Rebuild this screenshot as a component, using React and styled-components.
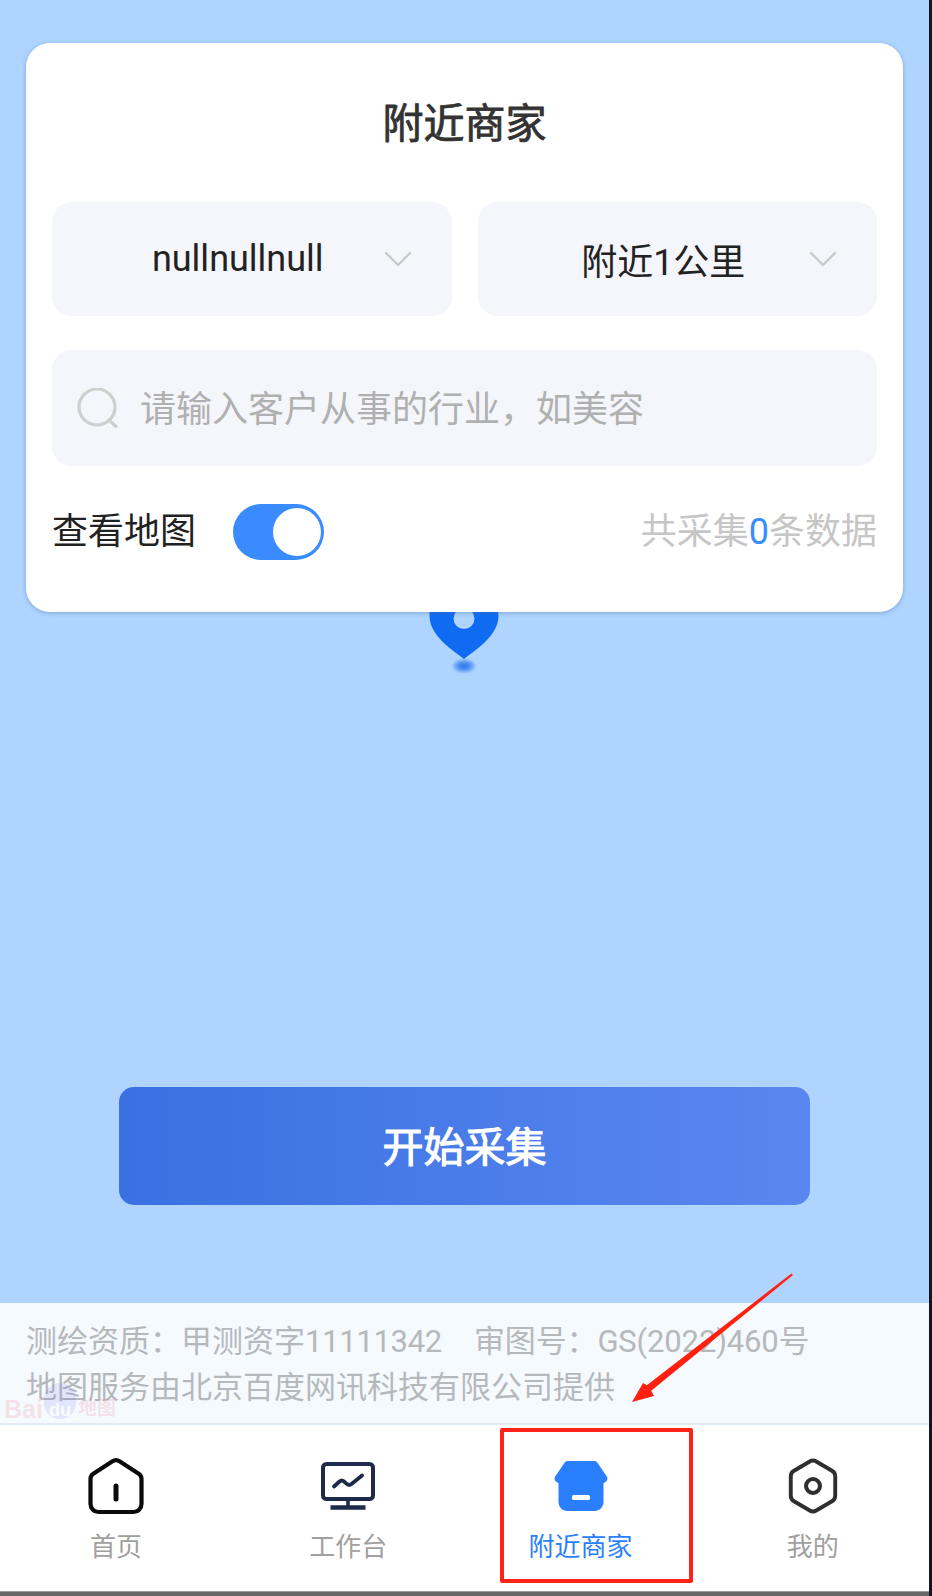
import React from "react";
import styled, { createGlobalStyle } from "styled-components";

const GlobalStyle = createGlobalStyle`
  html, body {
    margin: 0;
    padding: 0;
    background: #15151f;
  }
  * {
    box-sizing: border-box;
  }
  body {
    font-family: Roboto, "Noto Sans CJK SC", sans-serif;
  }
`;

const tabs = [
  { label: "首页", icon: <HomeIcon /> },
  { label: "工作台", icon: <MonitorIcon /> },
  { label: "附近商家", icon: <StoreIcon />, active: true },
  { label: "我的", icon: <HexIcon /> },
];

export default function App() {
  return (
    <>
      <GlobalStyle />
      <Screen>
        <MapArea>
          <Pin />
          <Card>
            <Title>附近商家</Title>
            <Selects>
              <Select>
                <SelectText>nullnullnull</SelectText>
                <Chevron />
              </Select>
              <Select>
                <SelectText>附近1公里</SelectText>
                <Chevron />
              </Select>
            </Selects>
            <Search>
              <SearchIcon />
              <Placeholder>请输入客户从事的行业，如美容</Placeholder>
            </Search>
            <MapRow>
              <MapToggle>
                <span>查看地图</span>
                <Toggle>
                  <Knob />
                </Toggle>
              </MapToggle>
              <Count>
                共采集<b>0</b>条数据
              </Count>
            </MapRow>
          </Card>
          <StartButton>开始采集</StartButton>
        </MapArea>
        <Credits>
          <CreditLine>
            测绘资质：甲测资字<Digits>11111342</Digits>
            <ReviewNo>审图号：GS(2022)460号</ReviewNo>
          </CreditLine>
          <CreditLine>地图服务由北京百度网讯科技有限公司提供</CreditLine>
          <BaiduMark>
            <i>Bai</i>
            <u>du</u>
            <i>地图</i>
          </BaiduMark>
        </Credits>
        <TabBar>
          {tabs.map((tab) => (
            <Tab key={tab.label} $active={tab.active}>
              <TabIcon>{tab.icon}</TabIcon>
              <span>{tab.label}</span>
            </Tab>
          ))}
        </TabBar>
        <BottomEdge />
        <RedBox />
        <RedArrow />
      </Screen>
    </>
  );
}

function Chevron() {
  return (
    <ChevronSvg width="28" height="16" viewBox="0 0 28 16" fill="none">
      <path d="M2 2l12 12L26 2" stroke="#c9c9c9" strokeWidth="2.4" strokeLinecap="round" strokeLinejoin="round" />
    </ChevronSvg>
  );
}

function SearchIcon() {
  return (
    <SearchSvg width="42" height="40" viewBox="0 0 42 40" fill="none">
      <circle cx="20" cy="19" r="18" stroke="#cfcfcf" strokeWidth="3.200" />
      <path d="M32 32l7 6.500" stroke="#cfcfcf" strokeWidth="3.200" strokeLinecap="round" />
    </SearchSvg>
  );
}

function Pin() {
  return (
    <PinSvg width="70" height="70" viewBox="0 0 70 70">
      <defs>
        <radialGradient id="pinShadow">
          <stop offset="0" stopColor="#1f6fee" stopOpacity="0.9" />
          <stop offset="0.45" stopColor="#1f6fee" stopOpacity="0.65" />
          <stop offset="1" stopColor="#1f6fee" stopOpacity="0" />
        </radialGradient>
      </defs>
      <ellipse cx="35" cy="63" rx="13" ry="8" fill="url(#pinShadow)" />
      <path
        fillRule="evenodd"
        fill="#0f6cf2"
        d="M35 56C28 50 .5 34 .5 13 .5-6 16-21 35-21s34.500 15 34.500 34C69.500 34 42 50 35 56zM35 5a10.500 10.500 0 1 0 0 21 10.500 10.500 0 0 0 0-21z"
      />
    </PinSvg>
  );
}

function HomeIcon() {
  return (
    <svg width="60" height="58" viewBox="0 0 60 58" fill="none">
      <path
        d="M4.500 22c0-2.200 1-4 2.800-5.200L26.500 4.200c2.300-1.500 4.700-1.500 7 0l19.200 12.600c1.800 1.200 2.800 3 2.800 5.200v25c0 4.400-3.600 8-8 8H12.500c-4.400 0-8-3.600-8-8V22z"
        stroke="#0a0a0a"
        strokeWidth="4.200"
        strokeLinejoin="round"
      />
      <path d="M30 29v13" stroke="#0a0a0a" strokeWidth="5" strokeLinecap="round" />
    </svg>
  );
}

function MonitorIcon() {
  return (
    <svg width="56" height="50" viewBox="0 0 56 50" fill="none">
      <rect x="3" y="3" width="50" height="35" rx="3.500" stroke="#1e2a4a" strokeWidth="4" />
      <path d="M28 38v8" stroke="#1e2a4a" strokeWidth="3.600" />
      <path d="M10.500 46.500h35" stroke="#1e2a4a" strokeWidth="4.400" />
      <path
        d="M14 25.500l5.500-5c1.500-1.300 3-1.300 4.500 0l3 2.600c1.500 1.200 3 1.200 4.500 0L42 14.500"
        stroke="#1e2a4a"
        strokeWidth="3.800"
        strokeLinecap="round"
        strokeLinejoin="round"
      />
    </svg>
  );
}

function StoreIcon() {
  return (
    <svg width="54" height="52" viewBox="0 0 54 52">
      <path
        fill="#2a7fff"
        d="M14 1h26c1.500 0 2.700.6 3.500 1.800l9.300 13.600c1.100 1.600.8 3.900-.8 5l-2.500 1.800V42c0 5-4 9-9 9H13.500c-5 0-9-4-9-9V23.200L2 21.400c-1.600-1.100-1.900-3.400-.8-5l9.300-13.600C11.300 1.600 12.500 1 14 1z"
      />
      <rect x="18" y="35" width="18" height="5" rx="1.500" fill="#fff" />
    </svg>
  );
}

function HexIcon() {
  return (
    <svg width="50" height="56" viewBox="0 0 54 60" fill="none">
      <path
        d="M23.500 3.500c2.200-1.300 4.800-1.300 7 0l17 10c2.100 1.200 3.500 3.400 3.500 6v21c0 2.600-1.400 4.800-3.500 6l-17 10c-2.200 1.300-4.800 1.300-7 0l-17-10C4.400 45.300 3 43.100 3 40.500v-21c0-2.600 1.400-4.800 3.500-6l17-10z"
        stroke="#2e2e2e"
        strokeWidth="4.200"
      />
      <circle cx="27" cy="30" r="7.500" stroke="#2e2e2e" strokeWidth="4.400" />
    </svg>
  );
}

function RedArrow() {
  return (
    <ArrowSvg width="170" height="140" viewBox="0 0 170 140">
      <path fill="#ff2010" d="M160.500 1.500L15.800 113.300 12 111 1 130 23 124 20.200 118.700 162 3z" />
    </ArrowSvg>
  );
}

const Screen = styled.div`
  position: relative;
  width: 929px;
  height: 1596px;
  overflow: hidden;
  display: flex;
  flex-direction: column;
  background: #fff;
`;

const MapArea = styled.div`
  position: relative;
  height: 1303px;
  padding: 43px 26px 0;
  background: #aed4ff;
`;

const PinSvg = styled.svg`
  position: absolute;
  left: 429px;
  top: 603px;
  overflow: visible;
`;

const Card = styled.div`
  position: relative;
  height: 569px;
  padding: 0 26px;
  border-radius: 24px;
  background: #fff;
  box-shadow: 0 1px 4px rgba(70, 110, 160, 0.45);
`;

const Title = styled.h1`
  margin: 0;
  padding-top: 56px;
  height: 159px;
  font-size: 41px;
  line-height: 50px;
  font-weight: 400;
  -webkit-text-stroke: 0.8px #333;
  text-align: center;
  color: #333;
`;

const Selects = styled.div`
  display: grid;
  grid-template-columns: 1fr 1fr;
  gap: 26px;
`;

const Select = styled.div`
  position: relative;
  height: 114px;
  display: flex;
  align-items: center;
  justify-content: center;
  padding-right: 28px;
  border-radius: 20px;
  background: #f5f6fb;
`;

const SelectText = styled.span`
  font-size: 36px;
  color: #222;
`;

const ChevronSvg = styled.svg`
  position: absolute;
  right: 40px;
  top: 49px;
`;

const Search = styled.div`
  height: 116px;
  margin-top: 34px;
  display: flex;
  align-items: center;
  gap: 21px;
  padding-left: 25px;
  border-radius: 20px;
  background: #f5f6fb;
`;

const SearchSvg = styled.svg`
  flex: none;
`;

const Placeholder = styled.span`
  margin-bottom: 4px;
  font-size: 36px;
  color: #b0b0b0;
`;

const MapRow = styled.div`
  margin-top: 38px;
  height: 56px;
  display: flex;
  align-items: center;
  justify-content: space-between;
`;

const MapToggle = styled.div`
  display: flex;
  align-items: center;
  gap: 37px;
  font-size: 36px;
  color: #222;

  span {
    margin-bottom: 8px;
  }
`;

const Toggle = styled.div`
  width: 91px;
  height: 56px;
  padding: 4px 3px;
  display: flex;
  justify-content: flex-end;
  border-radius: 28px;
  background: #3a8bff;
`;

const Knob = styled.div`
  width: 48px;
  height: 48px;
  border-radius: 50%;
  background: #fff;
`;

const Count = styled.div`
  margin-bottom: 8px;
  font-size: 36px;
  color: #c6c6c6;

  b {
    font-weight: 400;
    color: #3a8bff;
  }
`;

const StartButton = styled.button`
  display: block;
  width: 691px;
  height: 118px;
  margin: 475px 0 0 93px;
  padding: 0 0 5px;
  border: 0;
  border-radius: 15px;
  font-family: inherit;
  font-size: 41px;
  font-weight: 400;
  -webkit-text-stroke: 1.1px #fff;
  color: #fff;
  background: linear-gradient(90deg, #3a70e2, #5a87ef);
`;

const Credits = styled.div`
  position: relative;
  height: 122px;
  padding: 16px 0 0 26px;
  border-bottom: 2px solid #e2eaf4;
  background: #f5faff;
`;

const CreditLine = styled.div`
  height: 46px;
  font-size: 31px;
  line-height: 46px;
  white-space: nowrap;
  color: #b6b9bc;
`;

const Digits = styled.span`
  letter-spacing: -0.3px;
`;

const ReviewNo = styled.span`
  margin-left: 32px;
  letter-spacing: -0.15px;
`;

const BaiduMark = styled.div`
  position: absolute;
  left: 4px;
  top: 76px;
  height: 40px;
  display: flex;
  align-items: flex-end;
  font-family: "Liberation Sans", "Noto Sans CJK SC", sans-serif;
  line-height: 20px;
  font-weight: 700;
  color: rgba(240, 70, 60, 0.14);

  i {
    font-style: normal;
    font-size: 25px;
  }

  i:last-child {
    font-size: 19px;
    margin-left: 2px;
  }

  u {
    width: 32px;
    height: 36px;
    margin-left: 1px;
    padding-top: 17px;
    text-align: center;
    text-decoration: none;
    font-size: 18px;
    border-radius: 16px;
    color: rgba(255, 255, 255, 0.85);
    background: rgba(90, 90, 230, 0.12);
  }
`;

const TabBar = styled.nav`
  height: 166px;
  padding-top: 29px;
  display: grid;
  grid-template-columns: repeat(4, 1fr);
`;

const Tab = styled.div`
  display: flex;
  flex-direction: column;
  align-items: center;
  font-size: 26px;
  line-height: 36px;
  color: ${(props) => (props.$active ? "#2a7fff" : "#a0a0a0")};
`;

const TabIcon = styled.div`
  height: 64px;
  margin-bottom: 11px;
  display: flex;
  align-items: center;
  justify-content: center;
`;

const BottomEdge = styled.div`
  position: absolute;
  left: 0;
  right: 0;
  bottom: 0;
  height: 5px;
  background: #666;
  border-top: 1px solid #999;
`;

const RedBox = styled.div`
  position: absolute;
  left: 500px;
  top: 1428px;
  width: 193px;
  height: 155px;
  border: 4px solid #ff2216;
  border-radius: 2px;
`;

const ArrowSvg = styled.svg`
  position: absolute;
  left: 631px;
  top: 1272px;
`;
